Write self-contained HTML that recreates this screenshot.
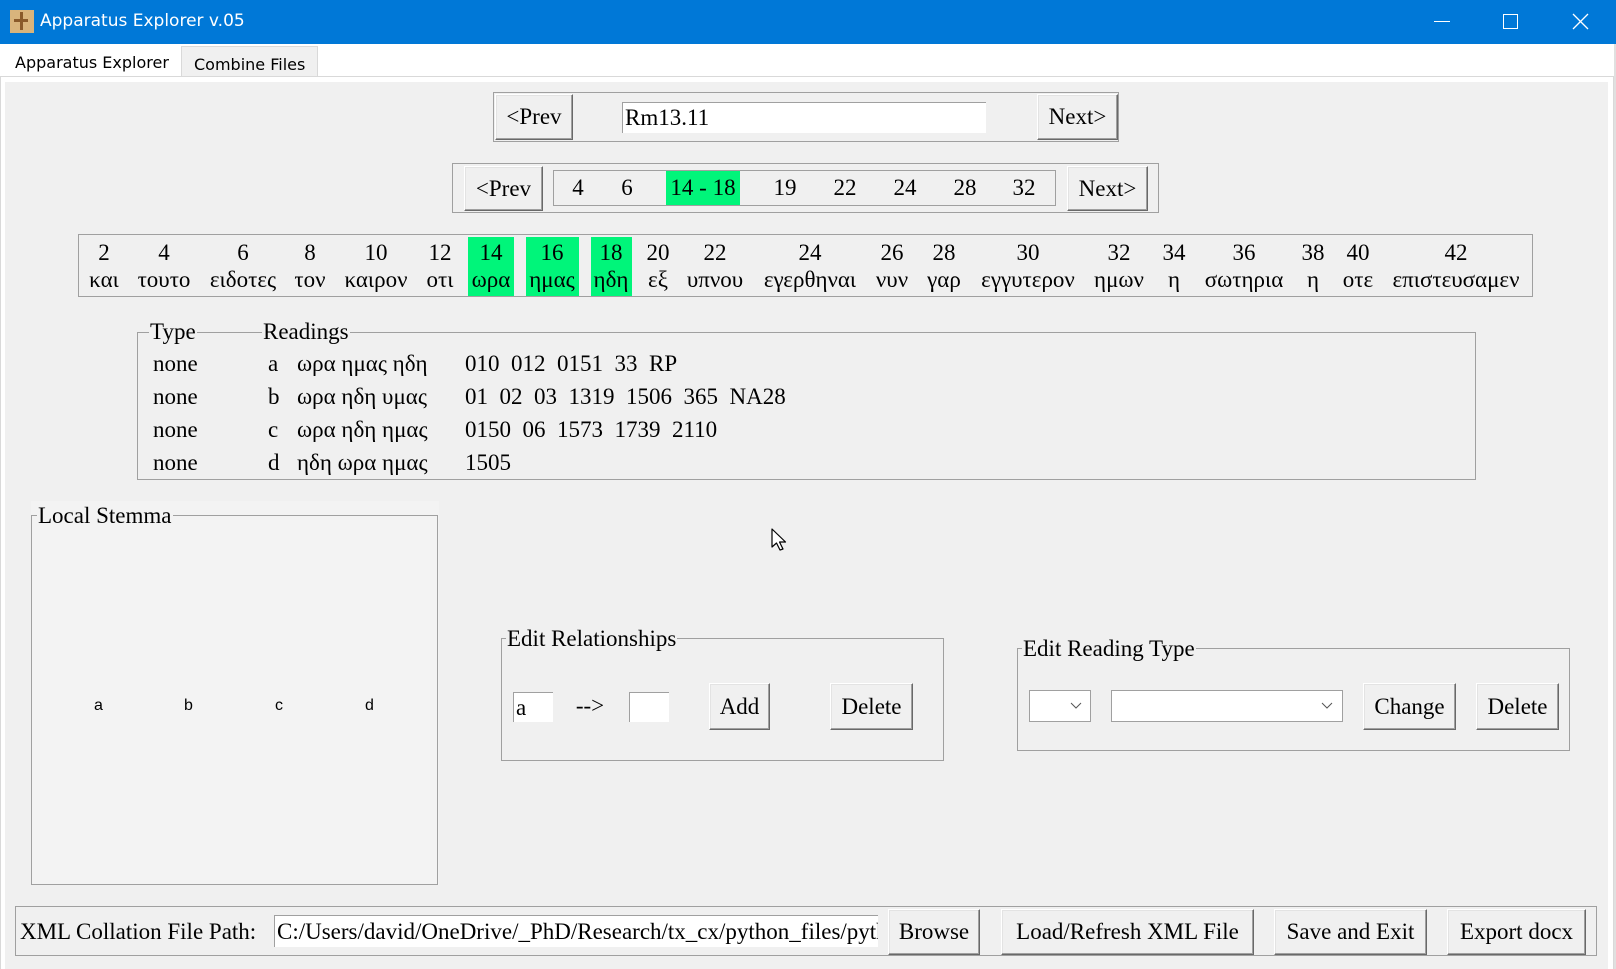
<!DOCTYPE html>
<html><head><meta charset="utf-8">
<style>
*{margin:0;padding:0;box-sizing:border-box}
body{width:1616px;height:969px;overflow:hidden;background:#fff;position:relative;font-family:"Liberation Serif",serif;font-size:23px;color:#000}
.a{position:absolute}
.btn{position:absolute;background:#f0f0f0;border:1px solid;border-color:#fff #696969 #696969 #fff;box-shadow:inset -1px -1px 0 #a0a0a0, inset 1px 1px 0 #e3e3e3;display:flex;align-items:center;justify-content:center;font-size:23px;white-space:nowrap}
.grp{position:absolute;border:1px solid #a0a0a0}
.ent{position:absolute;background:#fff;border-top:1px solid #a0a0a0;border-left:1px solid #a0a0a0;display:flex;align-items:center;white-space:nowrap;overflow:hidden;font-size:23px}
.lg{position:absolute;background:#f0f0f0;line-height:24px;padding:0 1px}
.c{position:absolute;transform:translateX(-50%);white-space:nowrap;text-align:center}
.g{position:absolute;background:#00f57a}
.cb{position:absolute;background:#fff;border:1px solid #a0a0a0}
</style></head><body>
<div class="a" style="left:0;top:0;width:1616px;height:44px;background:#0078d7"></div>
<div class="a" style="left:10px;top:10px;width:24px;height:23px;background:#d9b47c"></div>
<div class="a" style="left:20px;top:12px;width:3px;height:18px;background:#8a5a2a"></div>
<div class="a" style="left:14px;top:19px;width:14px;height:3px;background:#8a5a2a"></div>
<div class="a" style="left:40px;top:11px;font-family:'DejaVu Sans','Liberation Sans',sans-serif;font-size:17px;color:#fff">Apparatus Explorer v.05</div>
<div class="a" style="left:1434px;top:21px;width:16px;height:1px;background:#fff"></div>
<div class="a" style="left:1503px;top:14px;width:15px;height:15px;border:1px solid #fff"></div>
<svg class="a" style="left:1572px;top:13px" width="17" height="17"><path d="M1 1L16 16M16 1L1 16" stroke="#fff" stroke-width="1.3"/></svg>
<div class="a" style="left:181px;top:46px;width:137px;height:31px;background:#f0f0f0;border:1px solid #d9d9d9"></div>
<div class="a" style="left:15px;top:53px;font-family:'DejaVu Sans','Liberation Sans',sans-serif;font-size:16px">Apparatus Explorer</div>
<div class="a" style="left:194px;top:55px;font-family:'DejaVu Sans','Liberation Sans',sans-serif;font-size:16px">Combine Files</div>
<div class="a" style="left:0;top:76px;width:1614px;height:893px;border:1px solid #d9d9d9;border-bottom:none;background:#fff"></div>
<div class="a" style="left:5px;top:82px;width:1603px;height:887px;background:#f0f0f0"></div>
<div class="a" style="left:1614px;top:44px;width:2px;height:925px;background:#e0e0e0"></div>

<div class="grp" style="left:493px;top:92px;width:626px;height:50px"></div>
<div class="btn" style="left:495px;top:94px;width:78px;height:46px">&lt;Prev</div>
<div class="ent" style="left:622px;top:102px;width:364px;height:31px;padding-left:2px">Rm13.11</div>
<div class="btn" style="left:1037px;top:94px;width:81px;height:46px">Next&gt;</div>

<div class="grp" style="left:452px;top:163px;width:707px;height:50px"></div>
<div class="btn" style="left:464px;top:166px;width:79px;height:45px">&lt;Prev</div>
<div class="a" style="left:553px;top:170px;width:503px;height:36px;border:1px solid #a0a0a0"></div>
<div class="g" style="left:666px;top:171px;width:74px;height:34px"></div>
<div class="c" style="left:578px;top:175px">4</div>
<div class="c" style="left:627px;top:175px">6</div>
<div class="c" style="left:703px;top:175px">14 - 18</div>
<div class="c" style="left:785px;top:175px">19</div>
<div class="c" style="left:845px;top:175px">22</div>
<div class="c" style="left:905px;top:175px">24</div>
<div class="c" style="left:965px;top:175px">28</div>
<div class="c" style="left:1024px;top:175px">32</div>
<div class="btn" style="left:1067px;top:166px;width:81px;height:45px">Next&gt;</div>

<div class="grp" style="left:78px;top:234px;width:1455px;height:63px"></div>
<div class="g" style="left:468px;top:237px;width:46px;height:59px"></div>
<div class="g" style="left:526px;top:237px;width:53px;height:59px"></div>
<div class="g" style="left:591px;top:237px;width:41px;height:59px"></div>
<div id="words"></div>

<div class="grp" style="left:137px;top:332px;width:1339px;height:148px"></div>
<div class="lg" style="left:149px;top:320px">Type</div>
<div class="lg" style="left:262px;top:320px">Readings</div>
<div class="a" style="left:153px;top:347px;line-height:33px">none<br>none<br>none<br>none</div>
<div class="a" style="left:268px;top:347px;line-height:33px">a<br>b<br>c<br>d</div>
<div class="a" style="left:297px;top:347px;line-height:33px">ωρα ημας ηδη<br>ωρα ηδη υμας<br>ωρα ηδη ημας<br>ηδη ωρα ημας</div>
<div class="a" style="left:465px;top:347px;line-height:33px;white-space:pre">010  012  0151  33  RP
01  02  03  1319  1506  365  NA28
0150  06  1573  1739  2110
1505</div>

<div class="a" style="left:31px;top:501px;width:408px;height:384px;background:#f3f3f3"></div>
<div class="grp" style="left:31px;top:515px;width:407px;height:370px"></div>
<div class="lg" style="left:37px;top:504px;background:#f3f3f3">Local Stemma</div>
<div class="a" style="font-family:'Liberation Sans',sans-serif;font-size:16px;top:697px;left:94px">a</div>
<div class="a" style="font-family:'Liberation Sans',sans-serif;font-size:16px;top:697px;left:184px">b</div>
<div class="a" style="font-family:'Liberation Sans',sans-serif;font-size:16px;top:697px;left:275px">c</div>
<div class="a" style="font-family:'Liberation Sans',sans-serif;font-size:16px;top:697px;left:365px">d</div>

<svg class="a" style="left:771px;top:528px" width="20" height="30"><path d="M1 1L1 19L5.5 15L9 22L12 21L8.5 14L14.5 14Z" fill="#fff" stroke="#000" stroke-width="1.2" stroke-linejoin="round"/></svg>

<div class="grp" style="left:501px;top:638px;width:443px;height:123px"></div>
<div class="lg" style="left:506px;top:627px">Edit Relationships</div>
<div class="ent" style="left:513px;top:692px;width:40px;height:30px;padding-left:2px">a</div>
<div class="c" style="left:590px;top:693px">--&gt;</div>
<div class="ent" style="left:629px;top:692px;width:40px;height:30px"></div>
<div class="btn" style="left:709px;top:683px;width:61px;height:47px">Add</div>
<div class="btn" style="left:830px;top:683px;width:83px;height:47px">Delete</div>

<div class="grp" style="left:1017px;top:648px;width:553px;height:103px"></div>
<div class="lg" style="left:1022px;top:637px">Edit Reading Type</div>
<div class="cb" style="left:1029px;top:690px;width:62px;height:32px"></div>
<svg class="a" style="left:1070px;top:702px" width="12" height="8"><path d="M1 1L6 6L11 1" fill="none" stroke="#555"/></svg>
<div class="cb" style="left:1111px;top:690px;width:232px;height:32px"></div>
<svg class="a" style="left:1321px;top:702px" width="12" height="8"><path d="M1 1L6 6L11 1" fill="none" stroke="#555"/></svg>
<div class="btn" style="left:1363px;top:683px;width:93px;height:47px">Change</div>
<div class="btn" style="left:1476px;top:683px;width:83px;height:47px">Delete</div>

<div class="grp" style="left:15px;top:906px;width:1582px;height:50px"></div>
<div class="a" style="left:20px;top:919px">XML Collation File Path:</div>
<div class="ent" style="left:274px;top:915px;width:604px;height:32px;padding-left:2px">C:/Users/david/OneDrive/_PhD/Research/tx_cx/python_files/python</div>
<div class="btn" style="left:888px;top:909px;width:92px;height:46px">Browse</div>
<div class="btn" style="left:1001px;top:909px;width:253px;height:46px">Load/Refresh XML File</div>
<div class="btn" style="left:1274px;top:909px;width:153px;height:46px">Save and Exit</div>
<div class="btn" style="left:1447px;top:909px;width:139px;height:46px">Export docx</div>

<script>
var d=[[104,"2","και"],[164,"4","τουτο"],[243,"6","ειδοτες"],[310,"8","τον"],[376,"10","καιρον"],[440,"12","οτι"],[491,"14","ωρα"],[552,"16","ημας"],[611,"18","ηδη"],[658,"20","εξ"],[715,"22","υπνου"],[810,"24","εγερθηναι"],[892,"26","νυν"],[944,"28","γαρ"],[1028,"30","εγγυτερον"],[1119,"32","ημων"],[1174,"34","η"],[1244,"36","σωτηρια"],[1313,"38","η"],[1358,"40","οτε"],[1456,"42","επιστευσαμεν"]];
var h="";d.forEach(function(e){h+='<div class="c" style="left:'+e[0]+'px;top:239px;line-height:27px">'+e[1]+'<br>'+e[2]+'</div>';});
document.getElementById("words").innerHTML=h;
</script>
</body></html>
